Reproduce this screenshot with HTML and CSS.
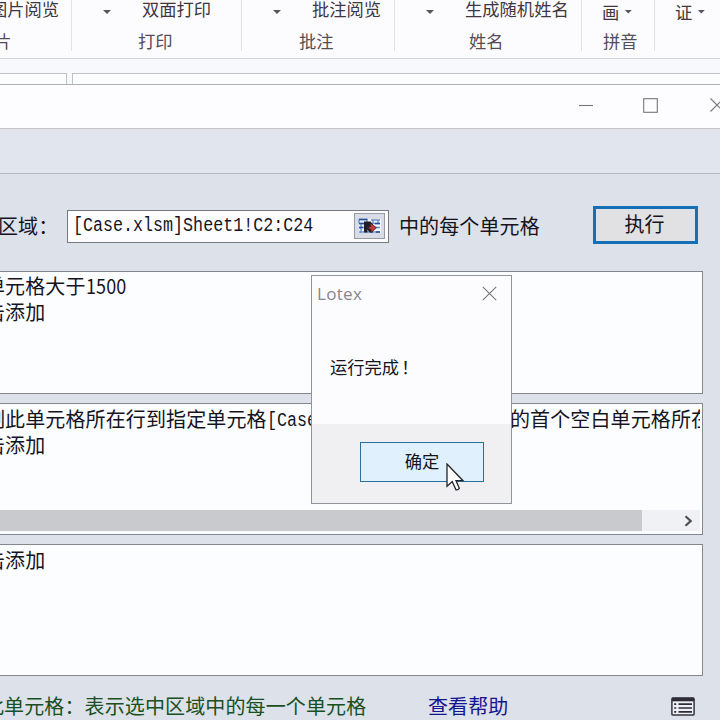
FILE: index.html
```html
<!DOCTYPE html>
<html lang="zh-CN">
<head>
<meta charset="utf-8">
<title>Lotex</title>
<link rel="stylesheet" href="styles.css">
</head>
<body>
<div class="screen">
  <div class="ribbon">
    <div class="group g-picture"><div class="cmd">图片阅览</div><div class="label">图片</div></div>
    <div class="group g-print"><div class="cmd"><i class="caret"></i>双面打印</div><div class="label">打印</div></div>
    <div class="group g-note"><div class="cmd"><i class="caret"></i>批注阅览</div><div class="label">批注</div></div>
    <div class="group g-name"><div class="cmd"><i class="caret"></i>生成随机姓名</div><div class="label">姓名</div></div>
    <div class="group g-pinyin"><div class="cmd">画<i class="caret"></i></div><div class="label">拼音</div></div>
    <div class="group g-id"><div class="cmd">证<i class="caret"></i></div></div>
  </div>
  <div class="formula-bar"><div class="name-box"></div><div class="formula-box"></div></div>

  <div class="titlebar">
    <svg class="min" width="14" height="14" viewBox="0 0 14 14"><path d="M0 7.5H14"/></svg>
    <svg class="max" width="15" height="15" viewBox="0 0 15 15"><rect x=".7" y=".7" width="13.6" height="13.6"/></svg>
    <svg class="close" width="14" height="14" viewBox="0 0 14 14"><path d="M.5 .5L13.5 13.5M13.5 .5L.5 13.5"/></svg>
  </div>
  <div class="toolbar"></div>

  <div class="form">
    <div class="range-row">
      <span class="range-label">区域：</span>
      <div class="range-input">
        <span class="mono">[Case.xlsm]Sheet1!C2:C24</span>
        <span class="picker">
          <svg width="24" height="18" viewBox="0 0 24 18">
            <rect x="1" y="2" width="22" height="14" fill="#f1f5fd"/>
            <path d="M1 2.5H10M1 2.5V6M13 3H22M1 6.5H22M1 10.5H7M16 10.5H22M1 15H22M3 7V16M9 2V6M15 3V7M20 3V7" fill="none" stroke="#6d91c8" stroke-width="1.4"/>
            <path d="M1 2.5H9M1 6.5H6M1 10.5H5M18 15H22M17 6.5H22" stroke="#254f9d" stroke-width="1.6"/>
            <path d="M6 4.5H12.5L15 7.5L12.5 10.5L15 15.5H11.5L9.5 12.5V15.5H6Z" fill="#211e29"/>
            <path d="M12 6L18.5 10.7L13.5 15.5L12.8 12.5L9.5 11L12.5 9.5Z" fill="#bd3b38" stroke="#4a2029" stroke-width=".8"/>
          </svg>
        </span>
      </div>
      <span class="range-tail">中的每个单元格</span>
      <div class="run">执行</div>
    </div>

    <div class="panel p1"><div class="line">单元格大于<span class="num">1500</span></div><div class="line">击添加</div></div>
    <div class="panel p2">
      <div class="line"><span class="before">制此单元格所在行到指定单元格<span class="mono">[Case</span></span><span>的首个空白单元格所在</span></div>
      <div class="line">击添加</div>
      <div class="scrollbar"><div class="thumb"></div><svg width="9" height="12" viewBox="0 0 9 12"><path d="M1.5 1.2L6.7 6L1.5 10.8"/></svg></div>
    </div>
    <div class="panel p3"><div class="line">击添加</div></div>

    <div class="status">
      <span class="hint">此单元格：表示选中区域中的每一个单元格</span>
      <span class="help">查看帮助</span>
      <svg class="list" width="24" height="19" viewBox="0 0 24 19">
        <rect x=".9" y=".9" width="22.2" height="17.2" rx="1.2" fill="#eef0f5" stroke="#36353f" stroke-width="1.5"/>
        <path d="M1 2.5H23" stroke="#2d2c37" stroke-width="3.6"/>
        <path d="M7.5 7.2H21M7.5 11H21M7.5 14.8H21" stroke="#2d2c37" stroke-width="1.7"/>
        <path d="M3.2 7.2H5.2M3.2 11H5.2M3.2 14.8H5.2" stroke="#2d2c37" stroke-width="1.7"/>
      </svg>
    </div>
  </div>

  <div class="dialog">
    <div class="dialog-title"><span>Lotex</span><svg width="15" height="15" viewBox="0 0 15 15"><path d="M.8 .8L14.2 14.2M14.2 .8L.8 14.2"/></svg></div>
    <div class="message">运行完成<span class="bang">！</span></div>
    <div class="dialog-foot"><div class="ok">确定</div></div>
  </div>
  <svg class="cursor" width="20" height="29" viewBox="0 0 20 29"><path d="M1 1V23.2L6.2 18.6L10 26.8Q12.3 27.2 13.3 25.2L10 17.7H17Z"/></svg>
</div>
</body>
</html>
```

FILE: styles.css
```css
* { box-sizing: border-box; }
body { margin: 0; }
svg { display: block; flex: none; }
.screen {
  position: relative;
  width: 720px;
  height: 720px;
  overflow: hidden;
  display: flex;
  flex-direction: column;
  background: #dde1ea;
  color: #15141d;
  font: 20px/26px "Noto Sans CJK SC", sans-serif;
  letter-spacing: .12px;
  white-space: nowrap;
}

/* Ribbon */
.ribbon {
  height: 59px;
  flex: none;
  display: flex;
  background: #fcfcff;
  border-bottom: 1px solid #d2d4da;
  color: #40363f;
  font-size: 17.3px;
  letter-spacing: 0;
}
.group { position: relative; flex: none; height: 51px; border-right: 1px solid #dfe1e8; }
.cmd { display: flex; align-items: center; height: 20px; line-height: 20px; margin-top: -1px; }
.label { height: 20px; line-height: 20px; margin-top: 12px; color: #544c57; }
.caret { flex: none; width: 8px; height: 4px; background: #59545e; clip-path: polygon(0 0, 100% 0, 50% 100%); margin-top: 6px; }
.g-picture { width: 72px; }
.g-picture .cmd { margin-left: -10px; }
.g-picture .label { margin-left: -23px; }
.g-print { width: 170px; }
.g-note { width: 153px; }
.g-name { width: 187px; }
.g-pinyin { width: 73px; }
.g-id { width: 65px; border-right: 0; }
.g-print .caret, .g-note .caret, .g-name .caret { margin-left: 31px; margin-right: 31px; }
.g-print .label { margin-left: 66px; }
.g-note .label { margin-left: 57px; }
.g-name .label { margin-left: 74px; }
.g-pinyin .label { margin-left: 21px; margin-top: 10px; }
.g-pinyin .cmd, .g-id .cmd { height: 22px; padding-top: 3px; margin-left: 20px; gap: 5px; }
.g-pinyin .caret, .g-id .caret { margin-top: 0; }

.formula-bar { height: 25px; flex: none; display: flex; gap: 5px; padding-top: 14px; background: #f7f9fd; }
.name-box { width: 67px; border: solid #bfc1c8; border-width: 1px 1px 0 0; background: #fcfdff; }
.formula-box { flex: 1; border: solid #bfc1c8; border-width: 1px 0 0 1px; background: #fcfdff; }

/* Window */
.titlebar {
  height: 45px;
  flex: none;
  display: flex;
  align-items: center;
  padding-left: 579px;
  padding-bottom: 3px;
  background: #fdfdff;
  border-top: 1px solid #aeb0b8;
  border-bottom: 1px solid #c3c5cb;
}
.titlebar svg, .dialog-title svg { fill: none; stroke: #77757c; stroke-width: 1.1; }
.max { margin-left: 50px; }
.close { margin-left: 52px; }
.toolbar { height: 45px; flex: none; background: linear-gradient(#e0e3e8, #e1e5ee 15%, #e1e5ee); border-bottom: 1px solid #b5b8c2; }
.form { flex: 1; display: flex; flex-direction: column; padding-top: 32px; }
.range-row { height: 38px; flex: none; display: flex; align-items: center; }
.range-label { width: 69px; margin-left: -2px; padding-top: 1px; }
.range-input { width: 322px; height: 33px; margin-top: 2px; display: flex; align-items: center; justify-content: space-between; padding: 0 3px 0 6px; border: 1px solid #777982; background: #fdfdff; }
.mono { display: inline-block; font-family: "Liberation Mono", monospace; font-size: 20px; line-height: 20px; letter-spacing: 0; transform: scaleX(.834); transform-origin: 0 50%; }
.range-input .mono { width: 241px; margin-left: -1px; }
.before .mono { margin-top: -1px; vertical-align: 1px; }
.picker { width: 31px; height: 26px; display: flex; align-items: center; justify-content: center; background: #d9dce6; border: 1px solid #9699a6; }
.range-tail { margin-left: 10px; width: 194px; padding-top: 1px; }
.run { width: 105px; height: 38px; border: 3px solid #146fb7; background: #e1e1e4; text-align: center; line-height: 30px; padding-right: 2px; }

.panel { width: 703px; flex: none; border: solid #85878f; border-width: 1px 1px 1px 0; background: #fcfdff; overflow: hidden; }
.line { height: 26px; margin-left: -15px; display: flex; }
.p1 { height: 123px; margin-top: 27px; padding-top: 1px; }
.p2 { height: 132px; margin-top: 9px; padding-top: 2px; display: flex; flex-direction: column; }
.p2 .line { flex: none; margin-right: 2px; overflow-x: clip; }
.p3 { height: 132px; margin-top: 9px; padding-top: 2px; }
.num { display: inline-block; transform: scaleX(.9); transform-origin: 0 50%; }
.before { width: 525px; flex: none; }
.scrollbar { height: 21px; margin: auto 2px 3px 0; background: #f0f1f4; display: flex; align-items: center; justify-content: space-between; padding-right: 7px; }
.thumb { width: 642px; height: 21px; background: #c9cace; }
.scrollbar svg { fill: none; stroke: #4e4e54; stroke-width: 2.2; }
.status { flex: 1; display: flex; align-items: center; padding: 16px 25px 0 0; }
.hint { color: #185022; margin-left: -16px; width: 444px; }
.help { color: #151590; }
.list { margin-left: auto; }

/* Message box */
.dialog { position: absolute; left: 311px; top: 275px; width: 201px; height: 229px; border: 1px solid #92949b; background: #fcfcff; font-size: 17.3px; letter-spacing: 0; display: flex; flex-direction: column; }
.dialog-title { height: 35px; display: flex; align-items: center; justify-content: space-between; padding: 0 14px 0 5px; color: #87868d; font-family: "Open Sans", sans-serif; font-size: 17px; letter-spacing: .3px; }
.message { flex: 1; padding: 43px 0 0 18px; }
.bang { margin-left: 2px; }
.dialog-foot { height: 79px; flex: none; padding: 18px 0 0 48px; background: #f0f0f2; }
.ok { width: 124px; height: 40px; border: 1px solid #26709f; background: #e1f0fd; text-align: center; line-height: 36px; }
.cursor { position: absolute; left: 446px; top: 463px; }
.cursor path { fill: #fff; stroke: #24232b; stroke-width: 1.3; }
```
